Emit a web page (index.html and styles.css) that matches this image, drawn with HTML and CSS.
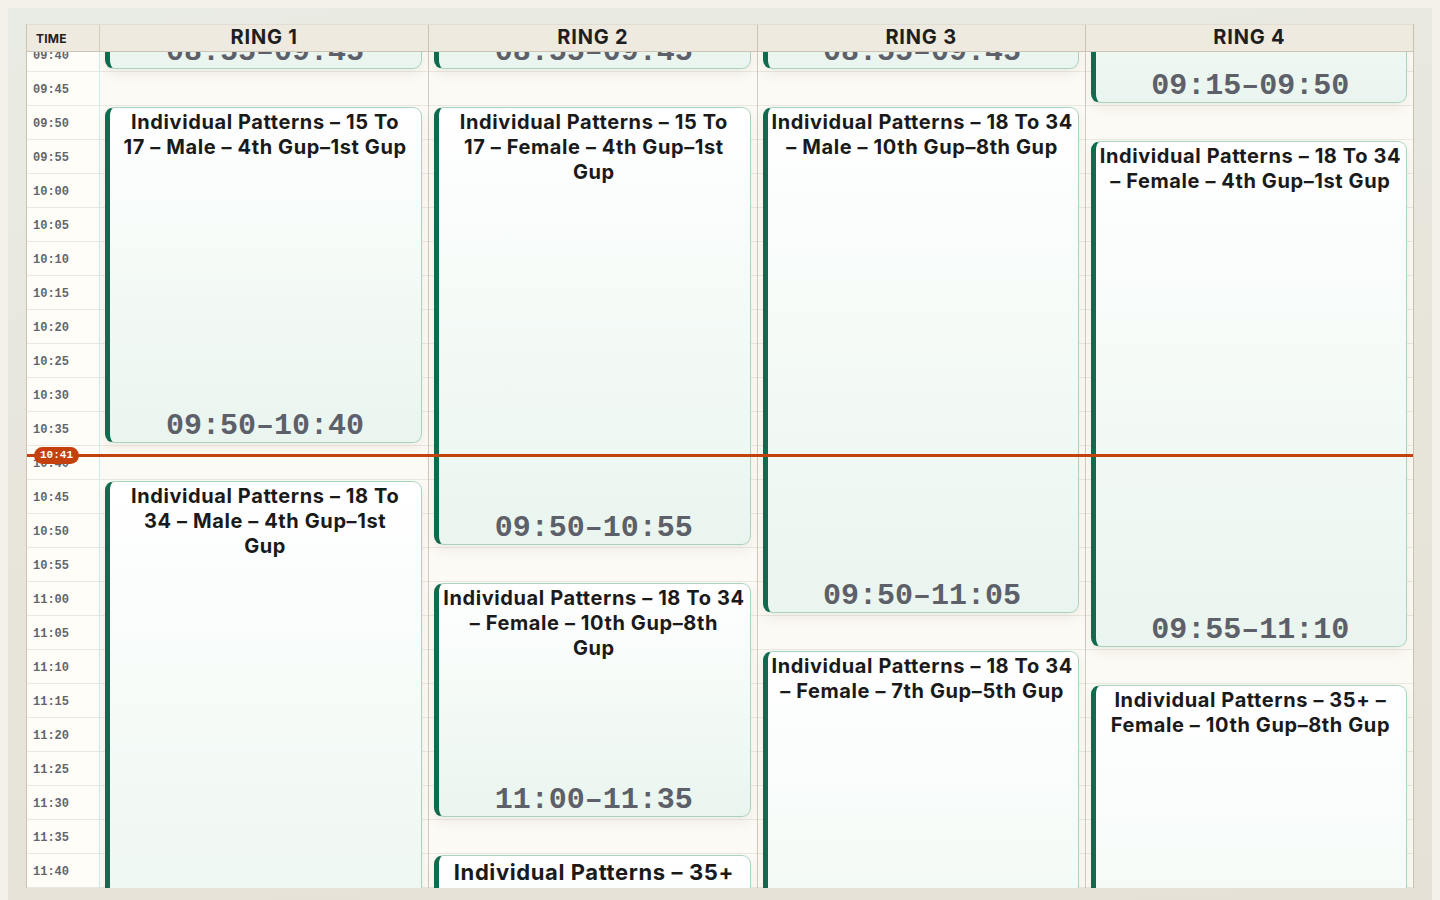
FILE: index.html
```html
<!DOCTYPE html>
<html lang="en">
<head>
<meta charset="utf-8">
<title>Ring Schedule</title>
<link rel="stylesheet" href="styles.css">
</head>
<body>
<div class="panel">
  <div class="schedule">
    <div class="head">
      <div class="head-time">TIME</div>
      <div class="head-ring">RING 1</div>
      <div class="head-ring">RING 2</div>
      <div class="head-ring">RING 3</div>
      <div class="head-ring">RING 4</div>
    </div>
    <div class="body">
      <div class="track">
        <div class="times">
          <div class="slot">09:40</div><div class="slot">09:45</div><div class="slot">09:50</div><div class="slot">09:55</div>
          <div class="slot">10:00</div><div class="slot">10:05</div><div class="slot">10:10</div><div class="slot">10:15</div>
          <div class="slot">10:20</div><div class="slot">10:25</div><div class="slot">10:30</div><div class="slot">10:35</div>
          <div class="slot">10:40</div><div class="slot">10:45</div><div class="slot">10:50</div><div class="slot">10:55</div>
          <div class="slot">11:00</div><div class="slot">11:05</div><div class="slot">11:10</div><div class="slot">11:15</div>
          <div class="slot">11:20</div><div class="slot">11:25</div><div class="slot">11:30</div><div class="slot">11:35</div>
          <div class="slot">11:40</div><div class="slot">11:45</div><div class="slot">11:50</div><div class="slot">11:55</div>
        </div>

        <div class="ring">
          <div class="lines"></div>
          <div class="event" style="top:-304px;height:336px"><div class="title">Individual Patterns – 12 To 14<br>– Male – 4th Gup–1st Gup</div><div class="time">08:55–09:45</div></div>
          <div class="event" style="top:70px;height:336px"><div class="title">Individual Patterns – 15 To<br>17 – Male – 4th Gup–1st Gup</div><div class="time">09:50–10:40</div></div>
          <div class="event" style="top:444px;height:540px"><div class="title">Individual Patterns – 18 To<br>34 – Male – 4th Gup–1st<br>Gup</div><div class="time">10:45–12:05</div></div>
        </div>

        <div class="ring">
          <div class="lines"></div>
          <div class="event" style="top:-304px;height:336px"><div class="title">Individual Patterns – 12 To 14<br>– Female – 4th Gup–1st Gup</div><div class="time">08:55–09:45</div></div>
          <div class="event" style="top:70px;height:438px"><div class="title">Individual Patterns – 15 To<br>17 – Female – 4th Gup–1st<br>Gup</div><div class="time">09:50–10:55</div></div>
          <div class="event" style="top:546px;height:234px"><div class="title">Individual Patterns – 18 To 34<br>– Female – 10th Gup–8th<br>Gup</div><div class="time">11:00–11:35</div></div>
          <div class="event" style="top:818px;height:234px"><div class="title title-lg">Individual Patterns – 35+<br>– Male – 10th Gup–8th Gup</div><div class="time">11:40–12:15</div></div>
        </div>

        <div class="ring">
          <div class="lines"></div>
          <div class="event" style="top:-304px;height:336px"><div class="title">Individual Patterns – 12 To 14<br>– Male – 10th Gup–8th Gup</div><div class="time">08:55–09:45</div></div>
          <div class="event" style="top:70px;height:506px"><div class="title">Individual Patterns – 18 To 34<br>– Male – 10th Gup–8th Gup</div><div class="time">09:50–11:05</div></div>
          <div class="event" style="top:614px;height:472px"><div class="title">Individual Patterns – 18 To 34<br>– Female – 7th Gup–5th Gup</div><div class="time">11:10–12:20</div></div>
        </div>

        <div class="ring">
          <div class="lines"></div>
          <div class="event" style="top:-168px;height:234px"><div class="title">Individual Patterns – 12 To 14<br>– Female – 10th Gup–8th Gup</div><div class="time">09:15–09:50</div></div>
          <div class="event" style="top:104px;height:506px"><div class="title">Individual Patterns – 18 To 34<br>– Female – 4th Gup–1st Gup</div><div class="time">09:55–11:10</div></div>
          <div class="event" style="top:648px;height:472px"><div class="title">Individual Patterns – 35+ –<br>Female – 10th Gup–8th Gup</div><div class="time">11:15–12:25</div></div>
        </div>
      </div>

      <div class="now">
        <div class="now-line"></div>
        <div class="now-badge">10:41</div>
      </div>
    </div>
  </div>
</div>
</body>
</html>
```

FILE: styles.css
```css
* { box-sizing: border-box; }

html, body {
  margin: 0;
  padding: 0;
  height: 100%;
  overflow: hidden;
}

body {
  background: #f3f1ea;
  padding: 8px 8px 0 8px;
  font-family: Inter, "Noto Sans", sans-serif;
  color: #1c1c1c;
}

.panel {
  height: 892px;
  padding: 16px 18px 12px 18px;
  background: linear-gradient(170deg, #e9ece4 0%, #e8e6dc 40%, #e6e1d6 100%);
}

.schedule {
  width: 1388px;
  height: 864px;
  border-left: 1px solid #cbc2b2;
  border-right: 1px solid #c9c0b0;
  display: flex;
  flex-direction: column;
}

.head {
  display: grid;
  grid-template-columns: 73px repeat(4, 1fr);
  height: 28px;
  background: #eeeadf;
  border-top: 1px solid #e2ddd2;
  border-bottom: 1px solid #cdc4b4;
  flex: none;
}

.head-time {
  font-size: 12px;
  font-weight: 700;
  letter-spacing: 0.2px;
  padding-left: 9px;
  display: flex;
  align-items: center;
  border-right: 1px solid #d3cbbc;
  color: #222;
}

.head-ring {
  font-size: 20px;
  font-weight: 700;
  letter-spacing: 0.8px;
  display: flex;
  align-items: center;
  justify-content: center;
  border-left: 1px solid #cbc2b2;
  color: #1e1e1e;
  padding-bottom: 2px;
}

.head-ring:nth-child(2) { border-left: none; }

.body {
  position: relative;
  flex: 1;
  overflow: hidden;
}

.track {
  display: grid;
  grid-template-columns: 73px repeat(4, 1fr);
  margin-top: -15px;
}

.times {
  background: #fffdf8;
  border-right: 1px solid #cdeef0;
}

.slot {
  height: 34px;
  border-top: 1px solid #ebe7df;
  padding-left: 6px;
  padding-top: 2px;
  display: flex;
  align-items: center;
  font-family: "Liberation Mono", monospace;
  font-weight: 700;
  font-size: 12px;
  color: #62656c;
}

.ring {
  position: relative;
  background: #fcfaf4;
  border-left: 1px solid #d2cabc;
}

.times + .ring { border-left: none; }

.lines {
  height: 952px;
  background: repeating-linear-gradient(
    to bottom,
    #ece8e0 0px,
    #ece8e0 1px,
    transparent 1px,
    transparent 34px
  );
}

.event {
  position: absolute;
  left: 5px;
  right: 6px;
  border: 1px solid #a9d3c1;
  border-left: 5px solid #0e6b4e;
  border-radius: 9px;
  background: linear-gradient(180deg, #ffffff 0%, #f6fbf8 40%, #eaf5ef 100%);
  box-shadow: 0 5px 12px rgba(70, 60, 40, 0.08);
  display: flex;
  flex-direction: column;
  align-items: center;
  padding: 2px 2px 0 1px;
  overflow: hidden;
}

.title {
  font-size: 20px;
  font-weight: 700;
  letter-spacing: 0.6px;
  line-height: 25px;
  text-align: center;
  color: #1a1a1a;
  white-space: nowrap;
}

.title-lg {
  font-size: 22px;
  line-height: 28px;
}

.time {
  margin-top: auto;
  margin-bottom: -1px;
  font-family: "Liberation Mono", monospace;
  font-weight: 700;
  font-size: 30px;
  line-height: 34px;
  color: #5d6068;
  white-space: nowrap;
}

.now {
  position: absolute;
  left: 0;
  right: 0;
  top: 402px;
  height: 3px;
}

.now-line {
  height: 3px;
  background: #c2410c;
}

.now-badge {
  position: absolute;
  left: 7px;
  top: -7px;
  height: 17px;
  padding: 0 6px;
  border-radius: 9px;
  background: #c2410c;
  color: #fff;
  font-family: "Liberation Mono", monospace;
  font-weight: 700;
  font-size: 11px;
  line-height: 17px;
}
```
